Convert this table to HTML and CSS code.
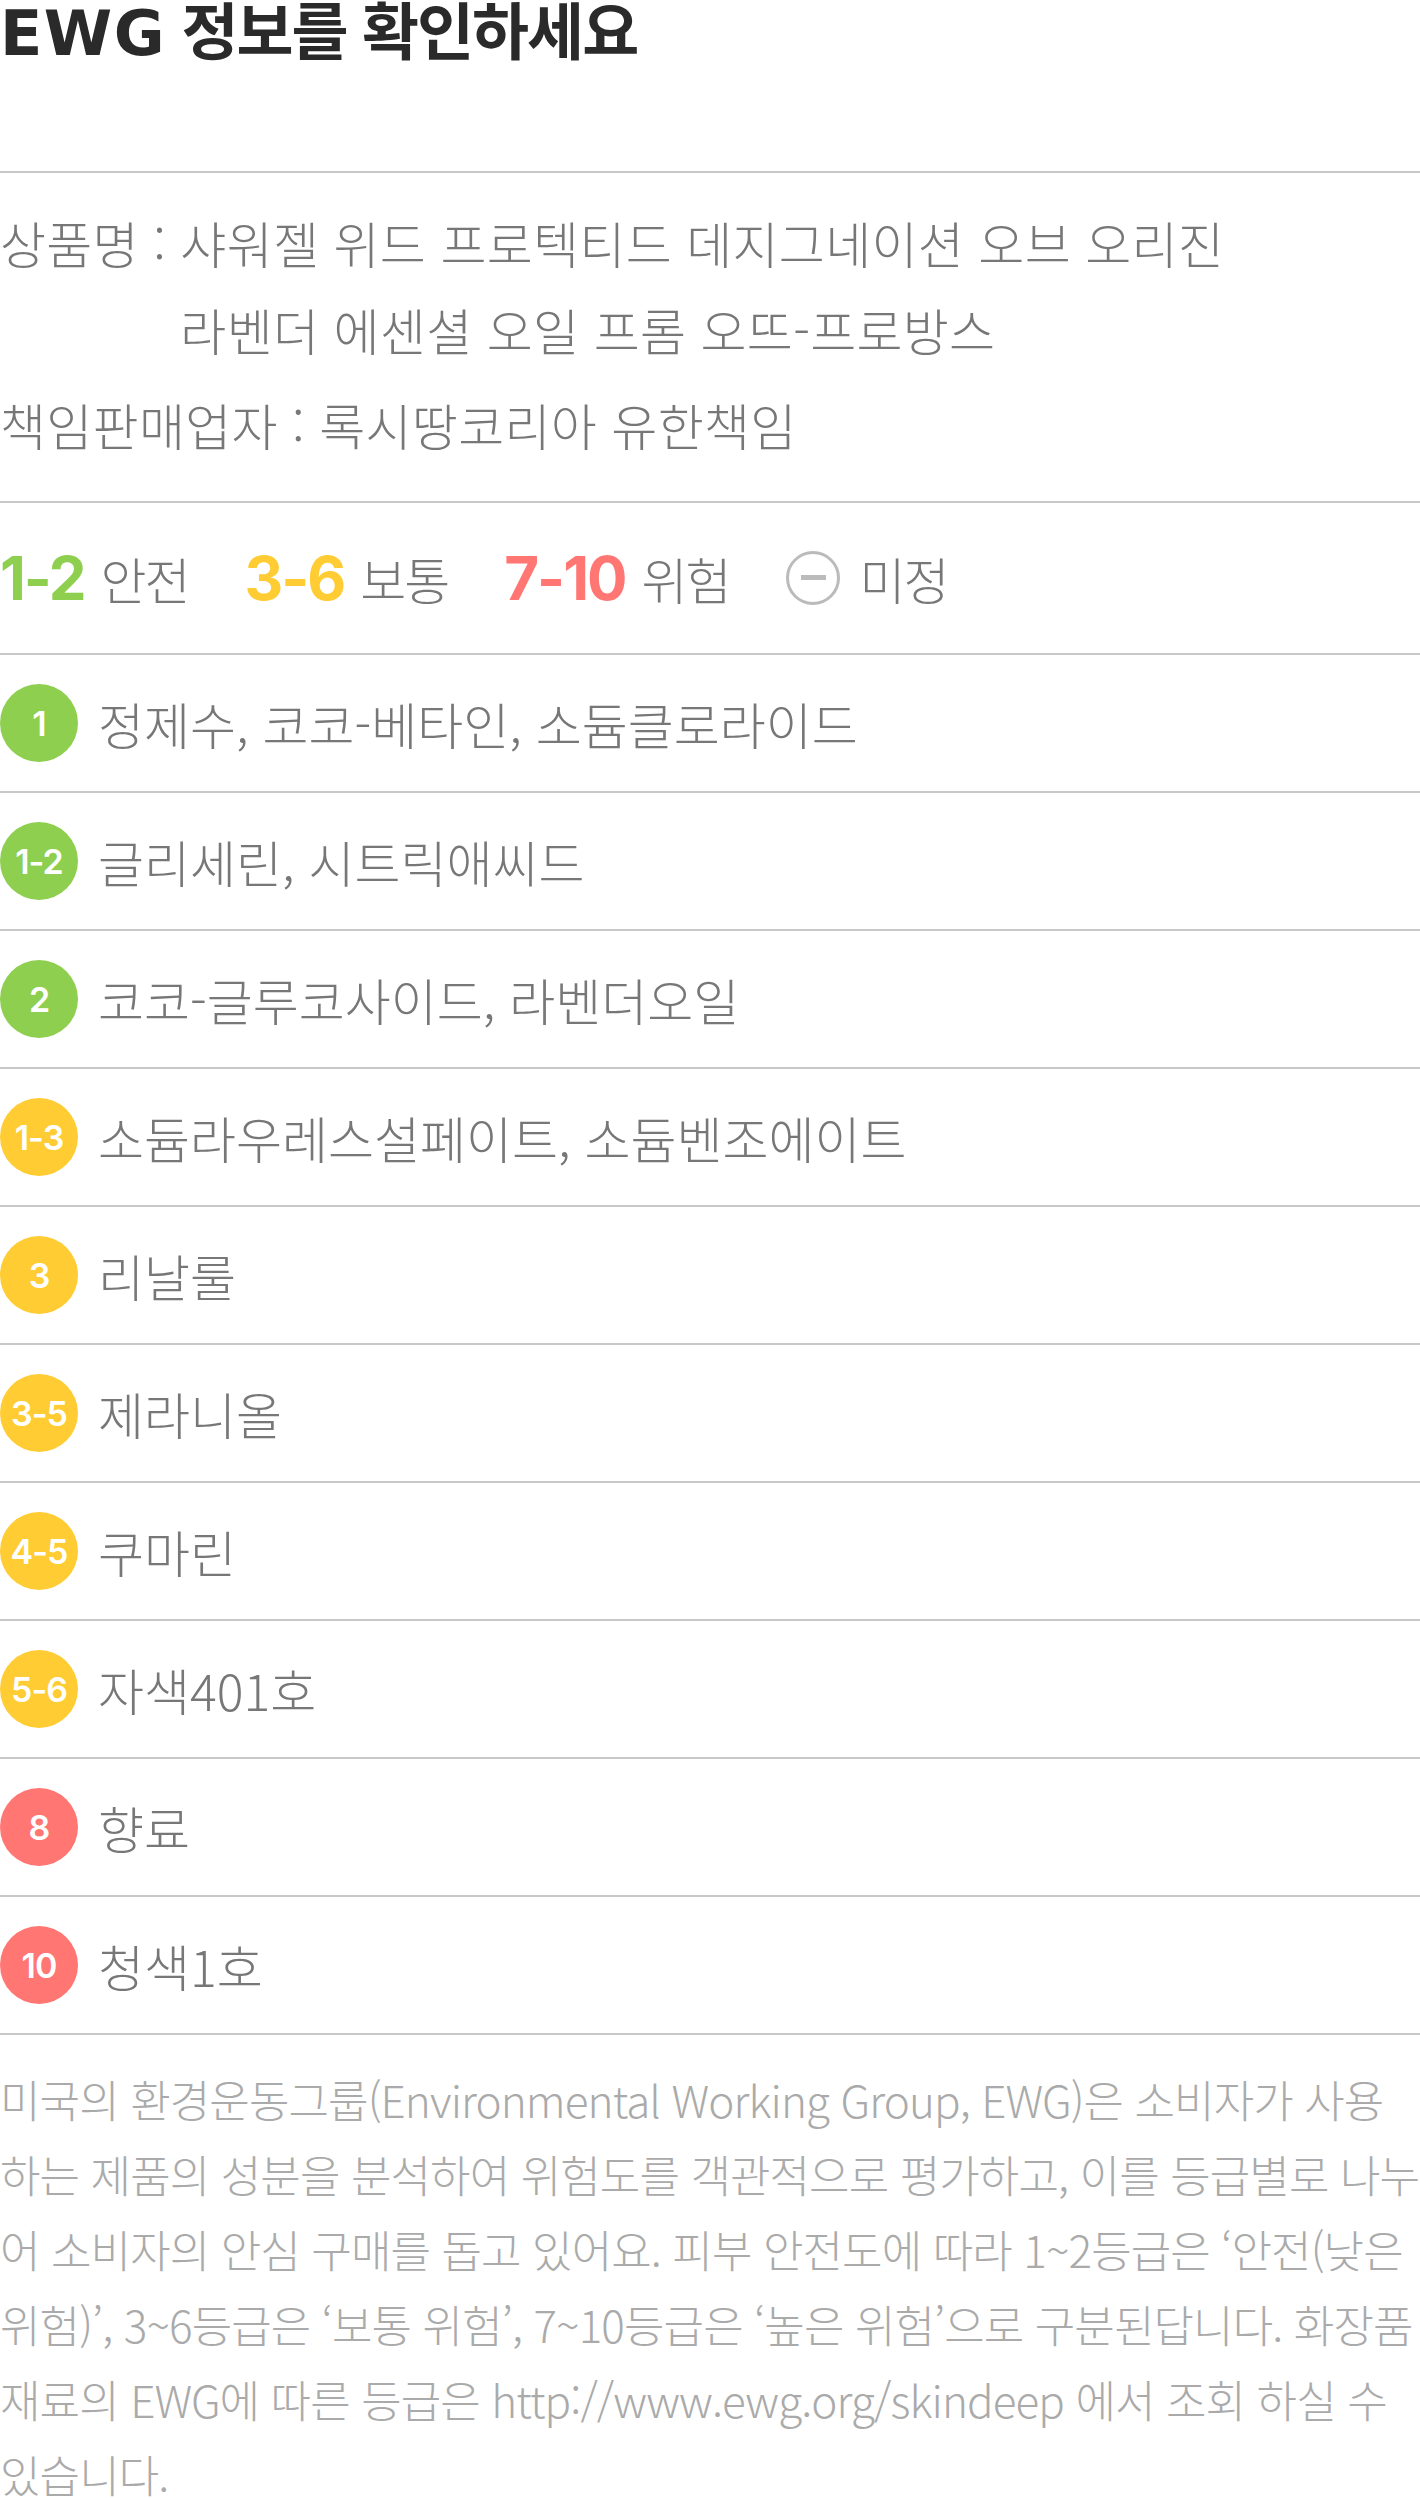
FILE: index.html
```html
<!DOCTYPE html>
<html lang="ko">
<head>
    <meta charset="UTF-8">
    <meta name="viewport" content="width=device-width, initial-scale=1.0">
    <title>EWG 정보를 확인하세요</title>
    <link rel="stylesheet" href="styles.css">
</head>
<body>
    <h1 class="title"><span class="latin">EWG</span> 정보를 확인하세요</h1>

    <div class="product-info">
        <p class="info-row">
            <span class="info-label">상품명 : </span>
            <span class="info-value">샤워젤 위드 프로텍티드 데지그네이션 오브 오리진 라벤더 에센셜 오일 프롬 오뜨-프로방스</span>
        </p>
        <p class="info-row">
            <span class="info-label">책임판매업자 : </span>
            <span class="info-value">록시땅코리아 유한책임</span>
        </p>
    </div>

    <div class="legend">
        <span class="legend-item"><b class="grade safe">1-2</b>안전</span>
        <span class="legend-item"><b class="grade normal">3-6</b>보통</span>
        <span class="legend-item"><b class="grade danger">7-10</b>위험</span>
        <span class="legend-item"><i class="unknown-icon"></i>미정</span>
    </div>

    <ul class="ingredients">
        <li><span class="badge safe">1</span>정제수, 코코-베타인, 소듐클로라이드</li>
        <li><span class="badge safe">1-2</span>글리세린, 시트릭애씨드</li>
        <li><span class="badge safe">2</span>코코-글루코사이드, 라벤더오일</li>
        <li><span class="badge normal">1-3</span>소듐라우레스설페이트, 소듐벤조에이트</li>
        <li><span class="badge normal">3</span>리날룰</li>
        <li><span class="badge normal">3-5</span>제라니올</li>
        <li><span class="badge normal">4-5</span>쿠마린</li>
        <li><span class="badge normal">5-6</span>자색401호</li>
        <li><span class="badge danger">8</span>향료</li>
        <li><span class="badge danger">10</span>청색1호</li>
    </ul>

    <p class="notice">미국의 환경운동그룹(Environmental Working Group, EWG)은 소비자가 사용하는 제품의 성분을 분석하여 위험도를 객관적으로 평가하고, 이를 등급별로 나누어 소비자의 안심 구매를 돕고 있어요. 피부 안전도에 따라 1~2등급은 ‘안전(낮은 위험)’, 3~6등급은 ‘보통 위험’, 7~10등급은 ‘높은 위험’으로 구분된답니다. 화장품 재료의 EWG에 따른 등급은 http://www.ewg.org/skindeep 에서 조회 하실 수 있습니다.</p>
</body>
</html>
```

FILE: styles.css
```css
body {
    margin: 0;
    font-family: "Noto Sans CJK KR", "Noto Sans", sans-serif;
    font-weight: 300;
    color: #777;
    background: #fff;
}
.title {
    margin: 0;
    height: 171px;
    font-size: 62px;
    line-height: 56px;
    font-weight: 700;
    letter-spacing: -2px;
    color: #2a2a2a;
    border-bottom: 2px solid #c8c8c8;
}
.title .latin {
    font-family: "DejaVu Sans", Inter, sans-serif;
    font-size: 62px;
    font-weight: 700;
    letter-spacing: 1.5px;
}
.product-info {
    padding: 26px 150px 33px 0;
    border-bottom: 2px solid #c8c8c8;
    font-size: 50px;
    line-height: 87px;
    letter-spacing: 0.3px;
}
.info-row {
    display: flex;
    margin: 0;
}
.info-row + .info-row {
    margin-top: 8px;
}
.info-label {
    white-space: pre;
}
.info-value {
    flex: 1;
}
.legend {
    display: flex;
    align-items: center;
    height: 150px;
    border-bottom: 2px solid #c8c8c8;
    font-size: 50px;
    letter-spacing: -2px;
}
.legend-item {
    display: flex;
    align-items: center;
    margin-right: 56px;
}
.grade {
    font-family: Inter, "Noto Sans", sans-serif;
    font-size: 60px;
    font-weight: 700;
    margin-right: 16px;
}
.grade.safe { color: #8ecf4f; }
.grade.normal { color: #ffcc33; }
.grade.danger { color: #ff7673; }
.unknown-icon {
    position: relative;
    width: 48px;
    height: 48px;
    border: 3.5px solid #bbb;
    border-radius: 50%;
    margin-right: 20px;
}
.unknown-icon::after {
    content: "";
    position: absolute;
    left: 12px;
    top: 21px;
    width: 25px;
    height: 5px;
    background: #bbb;
}
.ingredients {
    list-style: none;
    margin: 0;
    padding: 0;
}
.ingredients li {
    display: flex;
    align-items: center;
    height: 136px;
    border-bottom: 2px solid #c8c8c8;
    font-size: 50px;
}
.badge {
    display: flex;
    align-items: center;
    justify-content: center;
    flex: none;
    width: 78px;
    height: 78px;
    margin-right: 20px;
    border-radius: 50%;
    font-family: Inter, "Noto Sans", sans-serif;
    font-size: 34px;
    font-weight: 600;
    letter-spacing: -1px;
    color: #fff;
}
.badge.safe { background-color: #8ecf4f; }
.badge.normal { background-color: #ffcc33; }
.badge.danger { background-color: #ff7673; }
.notice {
    margin: 0;
    padding-top: 27px;
    font-size: 44px;
    line-height: 75px;
    letter-spacing: -0.9px;
    color: #aaa;
}
```
